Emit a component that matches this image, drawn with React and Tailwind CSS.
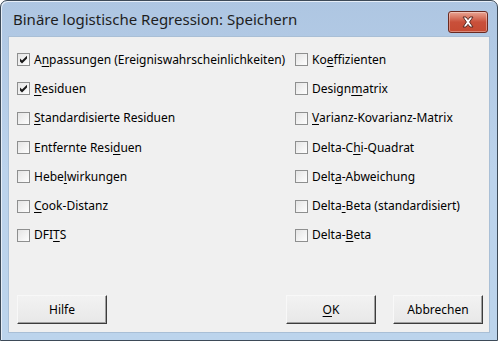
import React from "react";

// Access-key label: underline one letter
const Label = ({ text, u }) => {
	if (u == null) return <span>{text}</span>;
	return (
		<span>
			{text.slice(0, u)}
			<span className="underline underline-offset-2">{text[u]}</span>
			{text.slice(u + 1)}
		</span>
	);
};

const CheckBox = ({ checked }) => (
	<svg width="13" height="13" viewBox="0 0 13 13" className="shrink-0">
		<defs>
			<linearGradient id="cbg" x1="0" y1="0" x2="1" y2="1">
				<stop offset="0" stopColor="#e3e3e3" />
				<stop offset="1" stopColor="#ffffff" />
			</linearGradient>
		</defs>
		<rect x="0.5" y="0.5" width="12" height="12" fill="url(#cbg)" stroke="#8e8f8f" />
		{checked && (
			<path
				d="M3 5.5 L5 7.5 L10 2.8 L10 5.6 L5 10.4 L3 8.4 Z"
				fill="#1a1a1a"
			/>
		)}
	</svg>
);

const Option = ({ text, u, checked }) => (
	<div className="flex h-[29.3px] items-center gap-[4px]">
		<CheckBox checked={checked} />
		<span className="text-[12px] text-black">
			<Label text={text} u={u} />
		</span>
	</div>
);

const Button = ({ children, className = "" }) => (
	<button
		className={`h-[29px] w-[90px] border border-t-[#f8f8f8] border-l-[#f8f8f8] border-r-[#3c3c3c] border-b-[#3c3c3c] bg-gradient-to-b from-[#f2f2f2] to-[#e8e8e8] text-[12px] text-black shadow-[inset_-1px_-1px_0_#a0a0a0] ${className}`}
	>
		{children}
	</button>
);

const left = [
	{ text: "Anpassungen (Ereigniswahrscheinlichkeiten)", u: 1, checked: true },
	{ text: "Residuen", u: 0, checked: true },
	{ text: "Standardisierte Residuen", u: 0 },
	{ text: "Entfernte Residuen", u: 14 },
	{ text: "Hebelwirkungen", u: 4 },
	{ text: "Cook-Distanz", u: 0 },
	{ text: "DFITS", u: 3 },
];

const right = [
	{ text: "Koeffizienten", u: 2 },
	{ text: "Designmatrix", u: 6 },
	{ text: "Varianz-Kovarianz-Matrix", u: 0 },
	{ text: "Delta-Chi-Quadrat", u: 7 },
	{ text: "Delta-Abweichung", u: 4 },
	{ text: "Delta-Beta (standardisiert)", u: 5 },
	{ text: "Delta-Beta", u: 6 },
];

export default function App() {
	return (
		<div
			className="h-[341px] w-[498px] bg-white"
			style={{ fontFamily: "'Noto Sans', 'DejaVu Sans', sans-serif" }}
		>
			<div className="flex h-[341px] w-[498px] flex-col rounded-t-[7px] border border-[#3d4a58] bg-gradient-to-b from-[#aec6e2] via-[#bcd3ec] to-[#bcd4ec] shadow-[inset_1px_1px_0_#e6eef8]">
				{/* title bar */}
				<div className="relative flex h-[35px] shrink-0 items-center pl-[12px] pt-[2px]">
					<span className="text-[15px] text-[#1e1e1e]">
						Binäre logistische Regression: Speichern
					</span>
					<div className="absolute left-[447px] top-[10px] flex h-[22px] w-[40px] items-center justify-center rounded-[3px] border border-[#6b2a20] bg-gradient-to-b from-[#e8a493] via-[#c9503a] to-[#c64a32] shadow-[inset_0_0_0_1px_rgba(255,255,255,0.35)]">
						<svg width="16" height="14" viewBox="0 0 16 14">
							<path
								d="M3 2 L6 2 L8 4.6 L10 2 L13 2 L9.6 7 L13 12 L10 12 L8 9.4 L6 12 L3 12 L6.4 7 Z"
								fill="#ffffff"
								stroke="#5a2a22"
								strokeWidth="1"
								strokeLinejoin="round"
							/>
						</svg>
					</div>
				</div>

				{/* client area */}
				<div className="mx-[7px] mb-[7px] flex flex-1 flex-col border border-[#a9bfd6] bg-[#f0f0f0] pl-[8px] pr-[6px] pb-[8px] pt-[8px]">
					<div className="flex">
						<div className="w-[278px]">
							{left.map((o) => (
								<Option key={o.text} {...o} />
							))}
						</div>
						<div>
							{right.map((o) => (
								<Option key={o.text} {...o} />
							))}
						</div>
					</div>
					<div className="mt-auto flex items-end">
						<Button>Hilfe</Button>
						<div className="flex-1" />
						<Button className="mr-[17px]">
							<Label text="OK" u={0} />
						</Button>
						<Button>Abbrechen</Button>
					</div>
				</div>
			</div>
		</div>
	);
}
